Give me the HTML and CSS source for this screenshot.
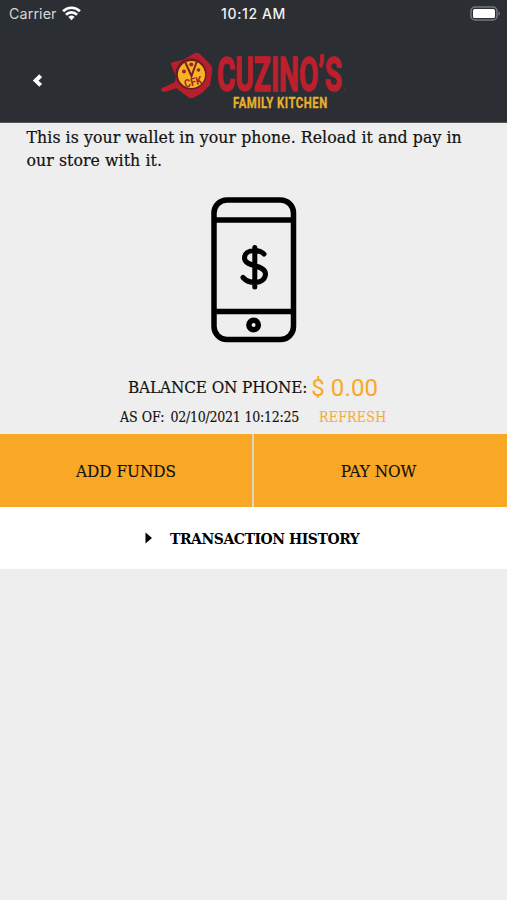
FILE: index.html
```html
<!DOCTYPE html>
<html lang="en">
<head>
<meta charset="utf-8">
<title>Wallet</title>
<link rel="stylesheet" href="styles.css">
</head>
<body>
<header class="header">
  <div class="status">
    <div class="status-left">
      <span class="carrier">Carrier</span>
      <svg class="wifi" width="19" height="15" viewBox="0 0 19 15" fill="none" stroke="#fff" stroke-width="2.7">
        <path d="M1.1 5.2a12 12 0 0 1 16.8 0M4 8.7a7.8 7.8 0 0 1 11 0"/>
        <path d="M9.5 14.2 6.4 11a4.6 4.6 0 0 1 6.2 0z" fill="#fff" stroke="none"/>
      </svg>
    </div>
    <span class="clock">10:12 AM</span>
    <svg class="battery" width="32" height="16" viewBox="0 0 32 16">
      <rect x="1" y="1" width="26" height="13" rx="4" fill="none" stroke="#77787c" stroke-width="1.5"/>
      <rect x="3" y="3" width="22" height="9" rx="1.5" fill="#fff"/>
      <path d="M28.5 5.2q3 2.3 0 4.6z" fill="#77787c"/>
    </svg>
  </div>
  <div class="nav">
    <svg class="back" width="12" height="16" viewBox="0 0 12 16"><path d="M9.700 2.800 4.700 7.600l5 4.800" fill="none" stroke="#fff" stroke-width="4"/></svg>
    <svg class="logo" width="190" height="62" viewBox="158 49 190 62">
      <path d="M162 88 177 81l6 5-18 6q-4 0-4-2.500z" fill="#b81e2b"/>
      <path d="M171 64q0-2 2-2l10-2 12-7q3-1 5 1l9 9q4 4 3 10l-2 12-8 8-9 5q-3 1-5-1l-12-9-2-3 2-8z" fill="#b81e2b"/>
      <circle cx="191" cy="74" r="15.500" fill="#641d24"/>
      <circle cx="191.500" cy="74.500" r="13.600" fill="#f6b323"/>
      <path d="M184.500 60.500 191.500 76 197.500 59.500" fill="none" stroke="#7d2025" stroke-width="2"/>
      <circle cx="191.300" cy="64.500" r="2" fill="#9d2225"/><circle cx="184" cy="71.500" r="2" fill="#9d2225"/><circle cx="198.500" cy="70" r="1.800" fill="#9d2225"/>
      <text class="logo-badge" x="184" y="86" textLength="18" lengthAdjust="spacingAndGlyphs" transform="rotate(-14 192 82)">CFK</text>
      <text class="logo-name" x="217" y="91" textLength="125" lengthAdjust="spacingAndGlyphs">CUZINO’S</text>
      <circle cx="345" cy="90" r="1" fill="#7c2029"/>
      <text class="logo-sub" transform="translate(233 107.500) scale(.76 1)" textLength="124">FAMILY KITCHEN</text>
    </svg>
  </div>
</header>
<main>
  <p class="intro">This is your wallet in your phone. Reload it and pay in<br>our store with it.</p>
  <svg class="phone" width="86" height="146" viewBox="0 0 86 146" fill="none" stroke="#000" stroke-width="5.500">
    <rect x="3" y="3" width="79.500" height="139.500" rx="13"/>
    <path d="M3 23h80M3 114.500h80"/>
    <circle cx="42.600" cy="128" r="4.700" stroke-width="5.500"/>
    <path d="M53 57C50 54 47 53.500 43.500 53.500c-6 0-10 3-10 7.500 0 9.500 21 6 21 16 0 5-4.500 8.500-10.500 8.500-5 0-9-1.500-12-5M43.800 50.500v39.500" stroke-width="5" stroke-linecap="round"/>
  </svg>
  <div class="balance"><span class="balance-label">BALANCE ON PHONE:</span><span class="amount">$ 0.00</span></div>
  <div class="asof"><span class="asof-label">AS OF:</span><span class="date">02/10/2021 10:12:25</span><span class="refresh">REFRESH</span></div>
  <div class="actions">
    <div class="action"><span class="add">ADD FUNDS</span></div>
    <div class="action"><span class="pay">PAY NOW</span></div>
  </div>
  <div class="history">
    <svg width="8" height="12" viewBox="0 0 8 12"><path d="M.5.500 7 6 .5 11.500z"/></svg>
    <span class="history-label">TRANSACTION HISTORY</span>
  </div>
</main>
</body>
</html>
```
FILE: styles.css
```css
* { box-sizing: border-box; }
body { margin: 0; min-height: 900px; background: #eee; color: #111; font-family: "Roboto Slab", "DejaVu Serif Condensed", "DejaVu Serif", serif; font-stretch: condensed; }
.header { height: 123px; background: #2b2e33; border-bottom: 1px solid #55585b; }
.status { height: 28px; display: grid; grid-template-columns: 1fr auto 1fr; align-items: center; padding: 0 5px 0 5px; font-family: Inter, "Liberation Sans", sans-serif; font-stretch: normal; font-size: 14px; color: #d4d5d7; }
.status-left { display: flex; align-items: center; gap: 5px; padding-left: 4px; }
.carrier { font-size: 14.3px; letter-spacing: .1px; margin-top: -1px; }
.wifi { margin-top: -2px; }
.clock { color: #f2f2f2; font-weight: 500; letter-spacing: .6px; margin-top: -1px; }
.battery { justify-self: end; margin-top: -1px; }
.nav { height: 94px; display: flex; align-items: center; padding: 0 0 0 31px; }
.back { margin-top: 12px; }
.logo { margin: 10px 0 0 115px; overflow: visible; }
.logo-badge { font: 700 11px Roboto, sans-serif; fill: #9d2225; }
.logo-name { font: 700 49px Roboto, sans-serif; fill: #bd1f2d; stroke: #bd1f2d; stroke-width: 1.5px; }
.logo-sub { font: 700 15px Roboto, sans-serif; fill: #e9b02c; stroke: #e9b02c; stroke-width: .3px; }
.intro { margin: 3px 0 0 26.5px; height: 46px; font-size: 17.5px; line-height: 22.5px; letter-spacing: .07px; white-space: nowrap; -webkit-text-stroke: .2px #111; }
.phone { display: block; margin: 25px 0 0 211px; }
.balance { height: 32px; margin: 28px 0 0 128px; display: flex; align-items: center; gap: 4px; white-space: nowrap; line-height: 32px; }
.balance-label { font-size: 17px; letter-spacing: -.12px; -webkit-text-stroke: .15px #111; }
.amount { margin-top: 2px; font-size: 24px; color: #f9a825; font-family: "Roboto Slab", Roboto, sans-serif; font-stretch: normal; letter-spacing: .1px; }
.asof { height: 24px; margin: 2px 0 0 120px; display: flex; line-height: 24px; font-size: 14px; white-space: nowrap; -webkit-text-stroke: .15px currentColor; }
.date { margin-left: 6px; letter-spacing: -.25px; }
.refresh { margin-left: 20px; color: #f5ad42; letter-spacing: .25px; }
.actions { height: 73px; margin-top: 5px; display: grid; grid-template-columns: 252px 1fr; gap: 2px; background: #ddd6c5; }
.action { background: #f9a825; display: flex; align-items: center; justify-content: center; font-size: 17px; white-space: nowrap; -webkit-text-stroke: .15px #111; }
.pay { margin-right: 4px; }
.history { height: 62px; background: #fff; display: flex; align-items: center; padding-left: 145px; gap: 17px; color: #000; font-size: 15.5px; font-weight: 700; letter-spacing: -.43px; white-space: nowrap; }
```
